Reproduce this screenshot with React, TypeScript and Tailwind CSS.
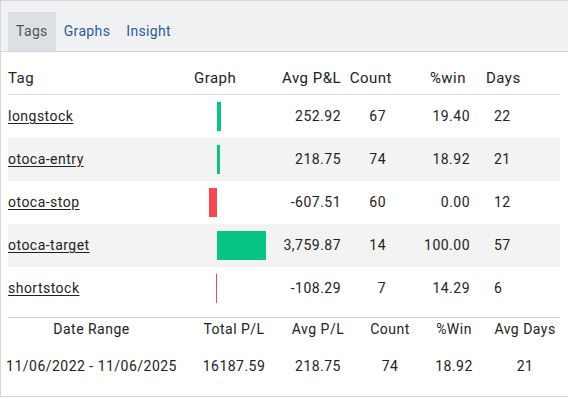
import React from "react";

type TagRow = {
  tag: string;
  neg: number;
  pos: number;
  avg: string;
  count: string;
  win: string;
  days: string;
};

const ROWS: TagRow[] = [
  { tag: "longstock", neg: 0, pos: 4, avg: "252.92", count: "67", win: "19.40", days: "22" },
  { tag: "otoca-entry", neg: 0, pos: 3, avg: "218.75", count: "74", win: "18.92", days: "21" },
  { tag: "otoca-stop", neg: 8, pos: 0, avg: "-607.51", count: "60", win: "0.00", days: "12" },
  { tag: "otoca-target", neg: 0, pos: 49, avg: "3,759.87", count: "14", win: "100.00", days: "57" },
  { tag: "shortstock", neg: 1, pos: 0, avg: "-108.29", count: "7", win: "14.29", days: "6" },
];

const COLS = "grid grid-cols-[182px_85px_66px_51px_78px_1fr]";

export default function App() {
  return (
    <div
      className="flex h-[397px] w-full flex-col border-y border-l border-[#d6d6d6] bg-white text-[#222] tracking-[0.03em]"
      style={{ fontFamily: "Roboto, 'Noto Sans', sans-serif" }}
    >
      {/* tab strip */}
      <div className="flex h-[51px] shrink-0 items-end border-b border-[#cfd1d4] bg-[#f0f1f3] pl-[7px]">
        <Tab on>Tags</Tab>
        <Tab>Graphs</Tab>
        <Tab>Insight</Tab>
      </div>

      <div className="ml-[7px] mr-2 mt-[10px]">
        <div className={`${COLS} h-[33px] items-center border-b border-[#dedede] text-[15px]`}>
          <span>Tag</span>
          <span className="pl-1">Graph</span>
          <span className="text-right">Avg P&amp;L</span>
          <span className="text-right">Count</span>
          <span className="pr-1 text-right">%win</span>
          <span className="pl-4">Days</span>
        </div>

        {ROWS.map((r, i) => (
          <div
            key={r.tag}
            className={`${COLS} h-[43px] items-center text-[14px] ${i % 2 === 1 ? "bg-[#f3f3f3]" : ""}`}
          >
            <span className="underline underline-offset-2">{r.tag}</span>
            <div className="flex h-[29px]">
              <div className="flex w-[27px] justify-end">
                {r.neg > 0 && (
                  <div className="h-full bg-[#f5474f]" style={{ width: r.neg }} />
                )}
              </div>
              <div className="flex flex-1 justify-start">
                {r.pos > 0 && (
                  <div className="h-full bg-[#08c483]" style={{ width: r.pos }} />
                )}
              </div>
            </div>
            <span className="whitespace-nowrap text-right">{r.avg}</span>
            <span className="pr-[6px] text-right">{r.count}</span>
            <span className="text-right">{r.win}</span>
            <span className="pl-6">{r.days}</span>
          </div>
        ))}

        {/* summary */}
        <div className="mt-[7px] border-t border-[#cfcfcf] text-[14px]">
          <div className="flex h-[23px] items-center">
            <Cell w="w-[167px]">Date Range</Cell>
            <Cell w="w-[118px]">Total P/L</Cell>
            <Cell w="w-[50px]">Avg P/L</Cell>
            <Cell w="w-[94px]">Count</Cell>
            <Cell w="w-[34px]">%Win</Cell>
            <Cell w="ml-[19px] w-[70px]">Avg Days</Cell>
          </div>
          <div className="flex h-[50px] items-center">
            <Cell w="w-[167px]">11/06/2022 - 11/06/2025</Cell>
            <Cell w="w-[118px]">16187.59</Cell>
            <Cell w="w-[50px]">218.75</Cell>
            <Cell w="w-[94px]">74</Cell>
            <Cell w="w-[34px]">18.92</Cell>
            <Cell w="ml-[19px] w-[70px]">21</Cell>
          </div>
        </div>
      </div>
    </div>
  );
}

function Tab({ on, children }: { on?: boolean; children: React.ReactNode }) {
  return (
    <button
      type="button"
      className={`flex h-[39px] items-center px-2 text-[14px] tracking-[0.025em] ${
        on ? "bg-[#dcdfe3] text-[#555]" : "text-[#2a5c9a]"
      }`}
    >
      {children}
    </button>
  );
}

function Cell({ w, children }: { w: string; children: React.ReactNode }) {
  return (
    <div className={`flex shrink-0 justify-center whitespace-nowrap ${w}`}>
      {children}
    </div>
  );
}
